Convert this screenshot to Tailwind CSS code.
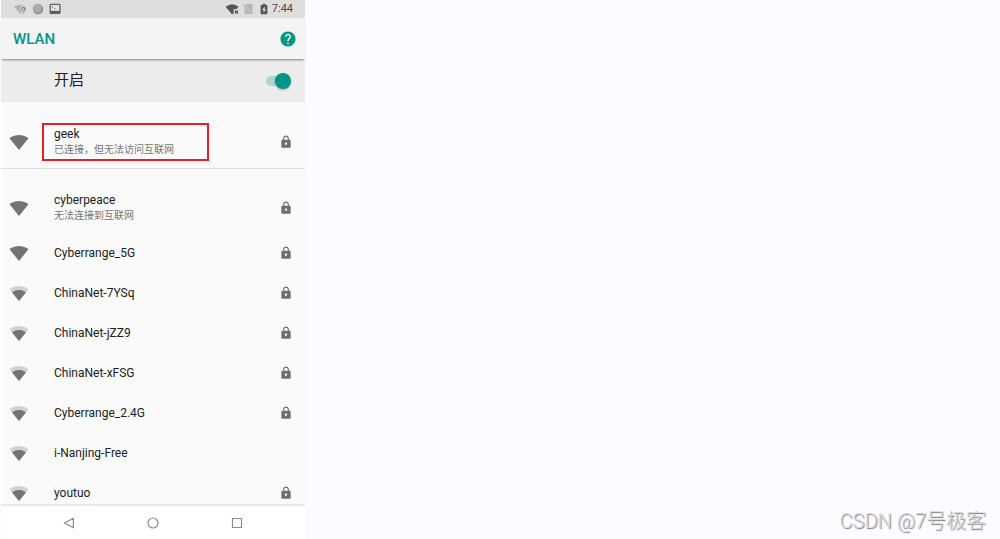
<!DOCTYPE html>
<html lang="zh-CN">
  <head>
    <meta charset="UTF-8" />
    <meta name="viewport" content="width=device-width, initial-scale=1.0" />
    <title>WLAN</title>
    <script src="https://cdn.jsdelivr.net/npm/@tailwindcss/browser@4"></script>
  </head>
  <body class="bg-[#fbfcff] font-[Roboto,'Noto_Sans_CJK_SC',sans-serif] text-[#212121]">
    <!-- Shared icons -->
    <svg class="hidden">
      <symbol id="wifi-full" viewBox="0 3 24 18.5">
        <path d="M12.01 21.49L23.64 7c-.45-.34-4.93-4-11.64-4C5.28 3 .81 6.66.36 7l11.63 14.49.01.01.01-.01z" />
      </symbol>
      <symbol id="wifi-mid" viewBox="0 3 24 18.5">
        <path fill-opacity=".3" d="M12.01 21.49L23.64 7c-.45-.34-4.93-4-11.64-4C5.28 3 .81 6.66.36 7l11.63 14.49.01.01.01-.01z" />
        <path d="M3.53 10.95l8.46 10.54.01.01.01-.01 8.46-10.54C20.04 10.62 16.81 8 12 8c-4.81 0-8.04 2.62-8.47 2.95z" />
      </symbol>
      <symbol id="lock" viewBox="0 0 24 24">
        <path d="M18 8h-1V6c0-2.76-2.24-5-5-5S7 3.24 7 6v2H6c-1.1 0-2 .9-2 2v10c0 1.1.9 2 2 2h12c1.1 0 2-.9 2-2V10c0-1.1-.9-2-2-2zm-6 9c-1.1 0-2-.9-2-2s.9-2 2-2 2 .9 2 2-.9 2-2 2zm3.1-9H8.9V6c0-1.71 1.39-3.1 3.1-3.1 1.71 0 3.1 1.39 3.1 3.1v2z" />
      </symbol>
    </svg>

    <div class="flex h-screen">
      <div class="ml-px flex w-full max-w-[304px] flex-col bg-[#fafafa]">
        <!-- Status bar -->
        <div class="flex h-[18px] shrink-0 items-center justify-between bg-[#dedede] px-3">
          <div class="flex items-center gap-[5px]">
            <svg class="h-3 w-[14px]" viewBox="0 0 14 12">
              <path fill="#b4b4b4" d="M1 4Q7-.6 13 4L7.5 11z" />
              <path fill="none" stroke="#dedede" stroke-width="2.4" d="M8.8 5.6a1.7 1.7 0 1 1 2.4 1.7l-.5 1.2" />
              <path fill="none" stroke="#777" stroke-width="1.2" d="M8.9 5.8a1.6 1.6 0 1 1 2.3 1.6q-.6.4-.6 1.2M10.6 9.4v1.2" />
            </svg>
            <svg class="size-3" viewBox="0 0 12 12">
              <circle cx="6" cy="6" r="5.2" fill="#8a8a8a" />
              <circle cx="5.5" cy="5.3" r="4.4" fill="#b0b0b0" />
              <path stroke="#9c9c9c" stroke-width=".8" d="M2.5 3.5l5.5 5M4.5 1.8l4.8 4.5M2 6l3 3" />
            </svg>
            <svg class="size-3" viewBox="0 0 12 12">
              <rect x="1.2" y="1.4" width="9.8" height="9" rx=".8" fill="#e4e4e4" stroke="#5f5f5f" stroke-width="1.3" />
              <path fill="#5f5f5f" d="M1.2 7.8H11v2.6H1.2z" />
              <path fill="none" stroke="#777" stroke-width=".8" d="M3 3.2l1 .9-1 .9M5 5.4h1.6" />
            </svg>
          </div>
          <div class="flex items-center gap-0.5">
            <svg class="h-3 w-[15px]" viewBox="0 0 15 12">
              <path fill="#555" d="M.6 3.8Q7-1.4 13.6 3.8L11.8 6H8.6v3.9L7.1 11.6z" />
              <path stroke="#555" stroke-width="1.2" d="M9.8 7.3l3.2 3.2M13 7.3l-3.2 3.2" />
            </svg>
            <svg class="size-3" viewBox="0 0 12 12">
              <path fill="#b4b4b4" d="M4.8 1H9.6q.8 0 .8.8V11H2.6V3.2z" />
              <path stroke="#dedede" stroke-width="2.2" d="M1.4 1.6l9 9.2" />
              <path stroke="#8d8d8d" stroke-width="1" d="M1.4 1.6l9.2 9.4" />
            </svg>
            <svg class="ml-0.5 size-3" viewBox="0 0 12 12">
              <path fill="#555" d="M4.6.8h2.8V2h1.4q.6 0 .6.6v8q0 .6-.6.6H3.2q-.6 0-.6-.6v-8q0-.6.6-.6h1.4z" />
              <path fill="#dedede" d="M6.6 3.4L4.2 7h1.4v2.8L8 6.2H6.6z" />
            </svg>
            <span class="text-[11px] leading-4 text-[#4c4c4c]">7:44</span>
          </div>
        </div>

        <!-- Title bar -->
        <header class="z-10 flex h-[41px] shrink-0 items-center justify-between bg-[#f4f4f4] px-3 shadow-[0_2px_2px_-1px_rgba(0,0,0,0.45)]">
          <h1 class="pt-0.5 text-[15px] font-medium text-[#009688]">WLAN</h1>
          <button class="-mr-1" type="button" aria-label="帮助">
            <svg class="size-[18px] fill-[#009688]" viewBox="0 0 24 24">
              <path d="M12 2C6.48 2 2 6.48 2 12s4.48 10 10 10 10-4.48 10-10S17.52 2 12 2zm1 17h-2v-2h2v2zm2.07-7.75l-.9.92C13.45 12.9 13 13.5 13 15h-2v-.5c0-1.1.45-2.1 1.17-2.83l1.24-1.26c.37-.36.59-.86.59-1.41 0-1.1-.9-2-2-2s-2 .9-2 2H8c0-2.21 1.79-4 4-4s4 1.79 4 4c0 .88-.36 1.68-.93 2.25z" />
            </svg>
          </button>
        </header>

        <div class="flex h-[43px] shrink-0 items-center justify-between bg-[#ececec] pr-3.5 pl-[53px]">
          <label for="wlan" class="text-[15px]">开启</label>
          <input
            id="wlan"
            type="checkbox"
            checked
            class="relative h-4 w-[25px] appearance-none before:absolute before:top-[3px] before:left-0 before:h-2.5 before:w-5 before:rounded-full before:bg-[#a9d6d1] after:absolute after:top-0 after:left-0 after:size-4 after:rounded-full after:bg-[#bdbdbd] after:shadow-[0_1px_2px_rgba(0,0,0,0.3)] checked:after:left-[9px] checked:after:bg-[#009688]"
          />
        </div>

        <!-- Networks -->
        <main class="min-h-0 flex-1 overflow-hidden text-xs">
          <button type="button" class="flex w-full items-center border-b border-[#dcdcdc] pt-[21px] pr-3 pb-[7px] pl-2 text-left">
            <svg class="h-[15px] w-5 fill-[#737373]"><use href="#wifi-full" /></svg>
            <span class="ml-[13px] w-[167px] border-2 border-[#ed1c24] px-2.5 py-0.5">
              <span class="block leading-[15px]">geek</span>
              <span class="block text-[10px] leading-[15px] text-[#757575]">已连接，但无法访问互联网</span>
            </span>
            <svg class="ml-auto size-[14px] fill-[#6e6e6e]"><use href="#lock" /></svg>
          </button>

          <button type="button" class="flex w-full items-center pt-6 pr-3 pb-2.5 pl-2 text-left">
            <svg class="h-[15px] w-5 fill-[#737373]"><use href="#wifi-full" /></svg>
            <span class="ml-[25px]">
              <span class="block leading-[15px]">cyberpeace</span>
              <span class="block text-[10px] leading-[15px] text-[#757575]">无法连接到互联网</span>
            </span>
            <svg class="ml-auto size-[14px] fill-[#6e6e6e]"><use href="#lock" /></svg>
          </button>

          <button type="button" class="flex h-10 w-full items-center pr-3 pl-2 text-left">
            <svg class="h-[15px] w-5 fill-[#737373]"><use href="#wifi-full" /></svg>
            <span class="ml-[25px]">Cyberrange_5G</span>
            <svg class="ml-auto size-[14px] fill-[#6e6e6e]"><use href="#lock" /></svg>
          </button>

          <button type="button" class="flex h-10 w-full items-center pr-3 pl-2 text-left">
            <svg class="h-[15px] w-5 fill-[#737373]"><use href="#wifi-mid" /></svg>
            <span class="ml-[25px]">ChinaNet-7YSq</span>
            <svg class="ml-auto size-[14px] fill-[#6e6e6e]"><use href="#lock" /></svg>
          </button>

          <button type="button" class="flex h-10 w-full items-center pr-3 pl-2 text-left">
            <svg class="h-[15px] w-5 fill-[#737373]"><use href="#wifi-mid" /></svg>
            <span class="ml-[25px]">ChinaNet-jZZ9</span>
            <svg class="ml-auto size-[14px] fill-[#6e6e6e]"><use href="#lock" /></svg>
          </button>

          <button type="button" class="flex h-10 w-full items-center pr-3 pl-2 text-left">
            <svg class="h-[15px] w-5 fill-[#737373]"><use href="#wifi-mid" /></svg>
            <span class="ml-[25px]">ChinaNet-xFSG</span>
            <svg class="ml-auto size-[14px] fill-[#6e6e6e]"><use href="#lock" /></svg>
          </button>

          <button type="button" class="flex h-10 w-full items-center pr-3 pl-2 text-left">
            <svg class="h-[15px] w-5 fill-[#737373]"><use href="#wifi-mid" /></svg>
            <span class="ml-[25px]">Cyberrange_2.4G</span>
            <svg class="ml-auto size-[14px] fill-[#6e6e6e]"><use href="#lock" /></svg>
          </button>

          <button type="button" class="flex h-10 w-full items-center pr-3 pl-2 text-left">
            <svg class="h-[15px] w-5 fill-[#737373]"><use href="#wifi-mid" /></svg>
            <span class="ml-[25px]">i-Nanjing-Free</span>
          </button>

          <button type="button" class="flex h-10 w-full items-center pr-3 pl-2 text-left">
            <svg class="h-[15px] w-5 fill-[#737373]"><use href="#wifi-mid" /></svg>
            <span class="ml-[25px]">youtuo</span>
            <svg class="ml-auto size-[14px] fill-[#6e6e6e]"><use href="#lock" /></svg>
          </button>
        </main>

        <!-- Navigation bar -->
        <nav class="flex h-[35px] shrink-0 justify-center border-t-2 border-[#e8e8e8] bg-white">
          <button type="button" class="flex w-[84px] items-center justify-center" aria-label="返回">
            <svg class="size-3 fill-none stroke-[#8c8c8c]" viewBox="0 0 12 12"><path stroke-width="1.2" stroke-linejoin="round" d="M10.4 1.2v9.6L1.4 6z" /></svg>
          </button>
          <button type="button" class="flex w-[84px] items-center justify-center" aria-label="主页">
            <svg class="size-3 fill-none stroke-[#8c8c8c]" viewBox="0 0 12 12"><circle cx="6" cy="6" r="5" stroke-width="1.2" /></svg>
          </button>
          <button type="button" class="flex w-[84px] items-center justify-center" aria-label="最近任务">
            <svg class="size-3 fill-none stroke-[#8c8c8c]" viewBox="0 0 12 12"><path stroke-width="1.2" d="M1.5 1.5h9v9h-9z" /></svg>
          </button>
        </nav>
      </div>

      <!-- Watermark -->
      <p class="mt-auto ml-auto pr-3.5 pb-1 text-xl font-light whitespace-nowrap text-[#dcdcde] [text-shadow:1px_1px_1px_#777]">CSDN @7号极客</p>
    </div>
  </body>
</html>
